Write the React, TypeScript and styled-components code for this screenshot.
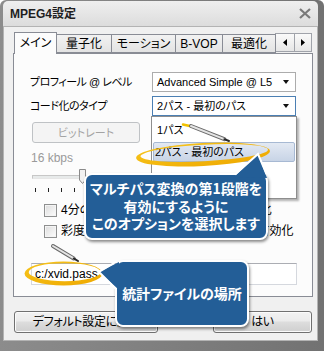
import React from 'react';
import styled, { createGlobalStyle } from 'styled-components';

const GlobalStyle = createGlobalStyle`
	html,
	body {
		margin: 0;
		padding: 0;
		background: #ffffff;
	}
	body {
		font-family: 'Liberation Sans', 'Noto Sans CJK JP', sans-serif;
		font-size: 11px;
		line-height: 14px;
		font-feature-settings: 'palt';
		color: #000;
	}
	* {
		box-sizing: border-box;
	}
`;

const Window = styled.div`
	position: relative;
	width: 324px;
	height: 351px;
	padding: 1px 6px 10px 3px;
	background: linear-gradient(to right, #8c8c8c, #727272);
	border-radius: 6px 6px 0 0;
	display: flex;
	flex-direction: column;
	overflow: hidden;
`;

const TitleBar = styled.div`
	height: 25px;
	display: flex;
	align-items: center;
	justify-content: space-between;
	padding: 0 7px 0 7px;
	background: linear-gradient(#efefef, #dcdcdc);
	border-radius: 5px 5px 0 0;
`;

const Title = styled.span`
	font-weight: bold;
	font-size: 12px;
	color: #1e1e1e;
`;

const Client = styled.div`
	flex: 1;
	display: flex;
	flex-direction: column;
	background: #f0f0f0;
	border: 1px solid #b3b3b3;
	padding: 5px 4px 0 9px;
`;

const TabStrip = styled.div`
	display: flex;
	align-items: flex-end;
	height: 21px;
	padding-left: 1px;
`;

const Tab = styled.div<{ $active?: boolean; $width: number }>`
	position: relative;
	width: ${(p) => p.$width}px;
	height: ${(p) => (p.$active ? 22 : 19)}px;
	margin-right: -1px;
	margin-bottom: ${(p) => (p.$active ? -1 : 0)}px;
	z-index: ${(p) => (p.$active ? 2 : 1)};
	display: flex;
	align-items: center;
	justify-content: center;
	border: 1px solid #898c95;
	border-bottom: ${(p) => (p.$active ? 'none' : '1px solid #898c95')};
	background: ${(p) => (p.$active ? '#fcfcfc' : 'linear-gradient(#f2f2f2, #e3e3e3)')};
	padding-bottom: ${(p) => (p.$active ? 1 : 0)}px;
	font-size: 12px;
`;

const TabArrows = styled.div`
	display: flex;
	margin-left: auto;
	margin-right: 1px;
	margin-bottom: 1px;
`;

const ArrowButton = styled.div<{ $width: number }>`
	width: ${(p) => p.$width}px;
	height: 19px;
	margin-left: -1px;
	display: flex;
	align-items: center;
	justify-content: center;
	border: 1px solid #a0a3aa;
	background: linear-gradient(#fafafa, #e6e6e6);
`;

const Panel = styled.div`
	height: 244px;
	border: 1px solid #898c95;
	background: #fcfcfc;
	padding: 18px 15px 0 16px;
	display: flex;
	flex-direction: column;
	align-items: flex-start;
`;

const FieldRow = styled.div<{ $gap?: number }>`
	display: flex;
	align-items: center;
	margin-top: ${(p) => p.$gap ?? 0}px;
`;

const FieldLabel = styled.span`
	width: 122px;
	letter-spacing: -0.5px;
`;

const Select = styled.div<{ $focused?: boolean }>`
	width: 144px;
	height: 20px;
	display: flex;
	align-items: center;
	justify-content: space-between;
	padding: 0 6px 0 4px;
	background: #fff;
	border: 1px solid ${(p) => (p.$focused ? '#4b7fb3' : '#acacac')};
	white-space: nowrap;
`;

const DownArrow = styled.span`
	width: 0;
	height: 0;
	border-left: 3.5px solid transparent;
	border-right: 3.5px solid transparent;
	border-top: 4px solid #111;
`;

const DisabledButton = styled.div`
	margin: 6px 0 0 2px;
	width: 108px;
	height: 21px;
	display: flex;
	align-items: center;
	justify-content: center;
	border: 1px solid #bfc2c5;
	border-radius: 3px;
	background: #f4f4f4;
	color: #a3a3a3;
`;

const RateText = styled.div`
	margin: 8px 0 0 1px;
	color: #9a9a9a;
	font-size: 12px;
`;

const Slider = styled.div`
	position: relative;
	margin: 4px 0 0 2px;
	width: 230px;
	height: 15px;
`;

const SliderTrack = styled.div`
	margin-top: 6px;
	height: 4px;
	border: 1px solid #c7c7c7;
	border-bottom-color: #e6e6e6;
	background: #e7eaea;
`;

const SliderThumb = styled.svg`
	position: absolute;
	left: 47px;
	top: 0;
`;

const Ticks = styled.div`
	display: flex;
	gap: 12px;
	margin: 4px 0 0 5px;
	height: 4px;
`;

const Tick = styled.span`
	width: 1px;
	height: 4px;
	background: #222;
`;

const CheckRow = styled.div<{ $gap: number }>`
	display: flex;
	align-items: center;
	gap: 4px;
	height: 14px;
	margin: ${(p) => p.$gap}px 0 0 14px;
	white-space: nowrap;
	font-size: 12px;
`;

const CheckBox = styled.span`
	width: 13px;
	height: 13px;
	flex: none;
	border: 1px solid #8e8f8f;
	background: linear-gradient(135deg, #dcdcdc, #fdfdfd);
	box-shadow: inset 0 0 0 1px #f4f4f4;
`;

const PathInput = styled.div`
	margin: 25px 0 0 1px;
	width: 266px;
	height: 22px;
	display: flex;
	align-items: center;
	padding-left: 3px;
	background: #fff;
	border: 1px solid #d5d8de;
	border-top-color: #abadb3;
	font-size: 12px;
`;

const ButtonRow = styled.div`
	display: flex;
	justify-content: space-between;
	margin-top: 14px;
	padding: 0 1px;
`;

const PushButton = styled.div<{ $width: number }>`
	width: ${(p) => p.$width}px;
	height: 22px;
	display: flex;
	align-items: center;
	justify-content: center;
	border: 1px solid #707070;
	border-radius: 3px;
	background: linear-gradient(#f2f2f2 0%, #ebebeb 45%, #dddddd 50%, #cfcfcf 100%);
	box-shadow: inset 0 0 0 1px #fbfbfb;
	white-space: nowrap;
	font-size: 12px;
	letter-spacing: -0.3px;
`;

const DropList = styled.div`
	position: absolute;
	left: 151px;
	top: 116px;
	width: 146px;
	height: 83px;
	padding: 3px 1px;
	background: #fff;
	border: 1px solid #8e8e8e;
	box-shadow: 2px 2px 2px rgba(0, 0, 0, 0.3);
	z-index: 3;
`;

const DropItem = styled.div<{ $selected?: boolean }>`
	height: 20px;
	margin-bottom: 2px;
	display: flex;
	align-items: center;
	padding-left: ${(p) => (p.$selected ? 1 : 3)}px;
	border: 1px solid ${(p) => (p.$selected ? '#a7b9d3' : 'transparent')};
	border-radius: 2px;
	background: ${(p) => (p.$selected ? 'linear-gradient(#e3e9f3, #c8d4e6)' : 'transparent')};
`;

const Overlay = styled.svg<{ $z: number }>`
	position: absolute;
	left: 0;
	top: 0;
	pointer-events: none;
	z-index: ${(p) => p.$z};
`;

const Callout = styled.div<{ $left: number; $top: number; $width: number; $height: number }>`
	position: absolute;
	left: ${(p) => p.$left}px;
	top: ${(p) => p.$top}px;
	width: ${(p) => p.$width}px;
	height: ${(p) => p.$height}px;
	display: flex;
	flex-direction: column;
	align-items: center;
	justify-content: center;
	border: 2px solid #ffffff;
	border-radius: 8px;
	background: #235e97;
	box-shadow: 1px 2px 3px rgba(0, 0, 0, 0.45);
	color: #ffffff;
	font-family: 'Noto Sans CJK JP', sans-serif;
	font-weight: bold;
	font-size: 14px;
	line-height: 17.5px;
	text-align: center;
	z-index: 5;
`;

const TABS = [
	{ label: 'メイン', width: 43 },
	{ label: '量子化', width: 56 },
	{ label: 'モーション', width: 65 },
	{ label: 'B-VOP', width: 48 },
	{ label: '最適化', width: 54 }
];

// ellipse ring path: outer minus a slightly shifted inner one gives a brush-like mark
const ring = (cx: number, cy: number, rx: number, ry: number, w: number) => {
	const ix = cx + w * 0.4;
	const iy = cy - w * 0.45;
	const irx = rx - w;
	const iry = ry - w;
	return (
		`M${cx - rx} ${cy} a${rx} ${ry} 0 1 0 ${rx * 2} 0 a${rx} ${ry} 0 1 0 ${-rx * 2} 0 Z ` +
		`M${ix - irx} ${iy} a${irx} ${iry} 0 1 0 ${irx * 2} 0 a${irx} ${iry} 0 1 0 ${-irx * 2} 0 Z`
	);
};

const Pencil: React.FC<{ x1: number; y1: number; x2: number; y2: number }> = ({ x1, y1, x2, y2 }) => {
	const len = Math.hypot(x2 - x1, y2 - y1);
	const ux = (x2 - x1) / len;
	const uy = (y2 - y1) / len;
	const tx = x2 - ux * 5;
	const ty = y2 - uy * 5;
	return (
		<g strokeLinecap="round">
			<line x1={x1} y1={y1} x2={tx} y2={ty} stroke="#6a6a6a" strokeWidth={4} />
			<line x1={x1} y1={y1} x2={tx} y2={ty} stroke="#e4e4e4" strokeWidth={2} />
			<line x1={tx} y1={ty} x2={x2} y2={y2} stroke="#2a2a2a" strokeWidth={2} />
		</g>
	);
};

const App: React.FC = () => {
	return (
		<>
			<GlobalStyle />
			<Window>
				<TitleBar>
					<Title>MPEG4設定</Title>
					<svg width="12" height="11" viewBox="0 0 12 11">
						<path d="M1 1 L11 10 M11 1 L1 10" stroke="#7a7a7a" strokeWidth="2.2" />
					</svg>
				</TitleBar>
				<Client>
					<TabStrip>
						{TABS.map((tab, i) => (
							<Tab key={tab.label} $active={i === 0} $width={tab.width}>
								{tab.label}
							</Tab>
						))}
						<TabArrows>
							<ArrowButton $width={20}>
								<svg width="4" height="7" viewBox="0 0 4 7">
									<path d="M4 0 L0 3.5 L4 7 Z" fill="#000" />
								</svg>
							</ArrowButton>
							<ArrowButton $width={18}>
								<svg width="4" height="7" viewBox="0 0 4 7">
									<path d="M0 0 L4 3.5 L0 7 Z" fill="#000" />
								</svg>
							</ArrowButton>
						</TabArrows>
					</TabStrip>
					<Panel>
						<FieldRow>
							<FieldLabel>プロフィール @ レベル</FieldLabel>
							<Select>
								Advanced Simple @ L5
								<DownArrow />
							</Select>
						</FieldRow>
						<FieldRow $gap={4}>
							<FieldLabel>コード化のタイプ</FieldLabel>
							<Select $focused>
								2パス - 最初のパス
								<DownArrow />
							</Select>
						</FieldRow>
						<DisabledButton>ビットレート</DisabledButton>
						<RateText>16 kbps</RateText>
						<Slider>
							<SliderTrack />
							<SliderThumb width="7" height="15" viewBox="0 0 7 15">
								<path d="M0.5 0.5 H6.5 V11 L3.5 14.5 L0.5 11 Z" fill="#f1f1f1" stroke="#8a8a8a" />
							</SliderThumb>
						</Slider>
						<Ticks>
							{Array.from({ length: 12 }).map((_, i) => (
								<Tick key={i} />
							))}
						</Ticks>
						<CheckRow $gap={11}>
							<CheckBox />
							4分の1ピクセル単位の動き補償を最適化
						</CheckRow>
						<CheckRow $gap={7}>
							<CheckBox />
							彩度の動き推定を使用して画質を常に有効化
						</CheckRow>
						<PathInput>c:/xvid.pass</PathInput>
					</Panel>
					<ButtonRow>
						<PushButton $width={144}>デフォルト設定に戻す</PushButton>
						<PushButton $width={99}>はい</PushButton>
					</ButtonRow>
				</Client>

				<DropList>
					<DropItem>1パス</DropItem>
					<DropItem $selected>2パス - 最初のパス</DropItem>
				</DropList>

				<Overlay $z={4} width="324" height="351" viewBox="0 0 324 351">
					<defs>
						<linearGradient id="mark" x1="0" y1="0" x2="1" y2="1">
							<stop offset="0" stopColor="#f7c51c" />
							<stop offset="1" stopColor="#eea800" />
						</linearGradient>
					</defs>
					<path
						d={ring(203, 154.5, 67, 11.5, 3.2)}
						fill="url(#mark)"
						fillRule="evenodd"
						transform="rotate(-3 203 154)"
					/>
					<path d={ring(63.5, 273.5, 39, 12, 3)} fill="url(#mark)" fillRule="evenodd" />
					<line x1="183" y1="124.5" x2="192" y2="126.5" stroke="#f2c200" strokeWidth="2.5" strokeLinecap="round" />
					<Pencil x1={191} y1={126} x2={229} y2={141} />
					<Pencil x1={53} y1={246} x2={78} y2={261} />
				</Overlay>

				<Callout $left={84} $top={173} $width={184} $height={67}>
					<span>マルチパス変換の第1段階を</span>
					<span>有効にするように</span>
					<span>このオプションを選択します</span>
				</Callout>
				<Callout $left={115} $top={260} $width={134} $height={67}>
					<span>統計ファイルの場所</span>
				</Callout>

				<Overlay $z={6} width="324" height="351" viewBox="0 0 324 351">
					<path d="M234 177 L258 154 L267 178 Z" fill="#235e97" />
					<path d="M235 174.5 L258 154 L266.5 174" fill="none" stroke="#fff" strokeWidth="2" />
					<path d="M119 262 L99 272 L119 290 Z" fill="#235e97" />
					<path d="M116.5 261.5 L99 272 L116.5 289.5" fill="none" stroke="#fff" strokeWidth="2" />
				</Overlay>
			</Window>
		</>
	);
};

export default App;
